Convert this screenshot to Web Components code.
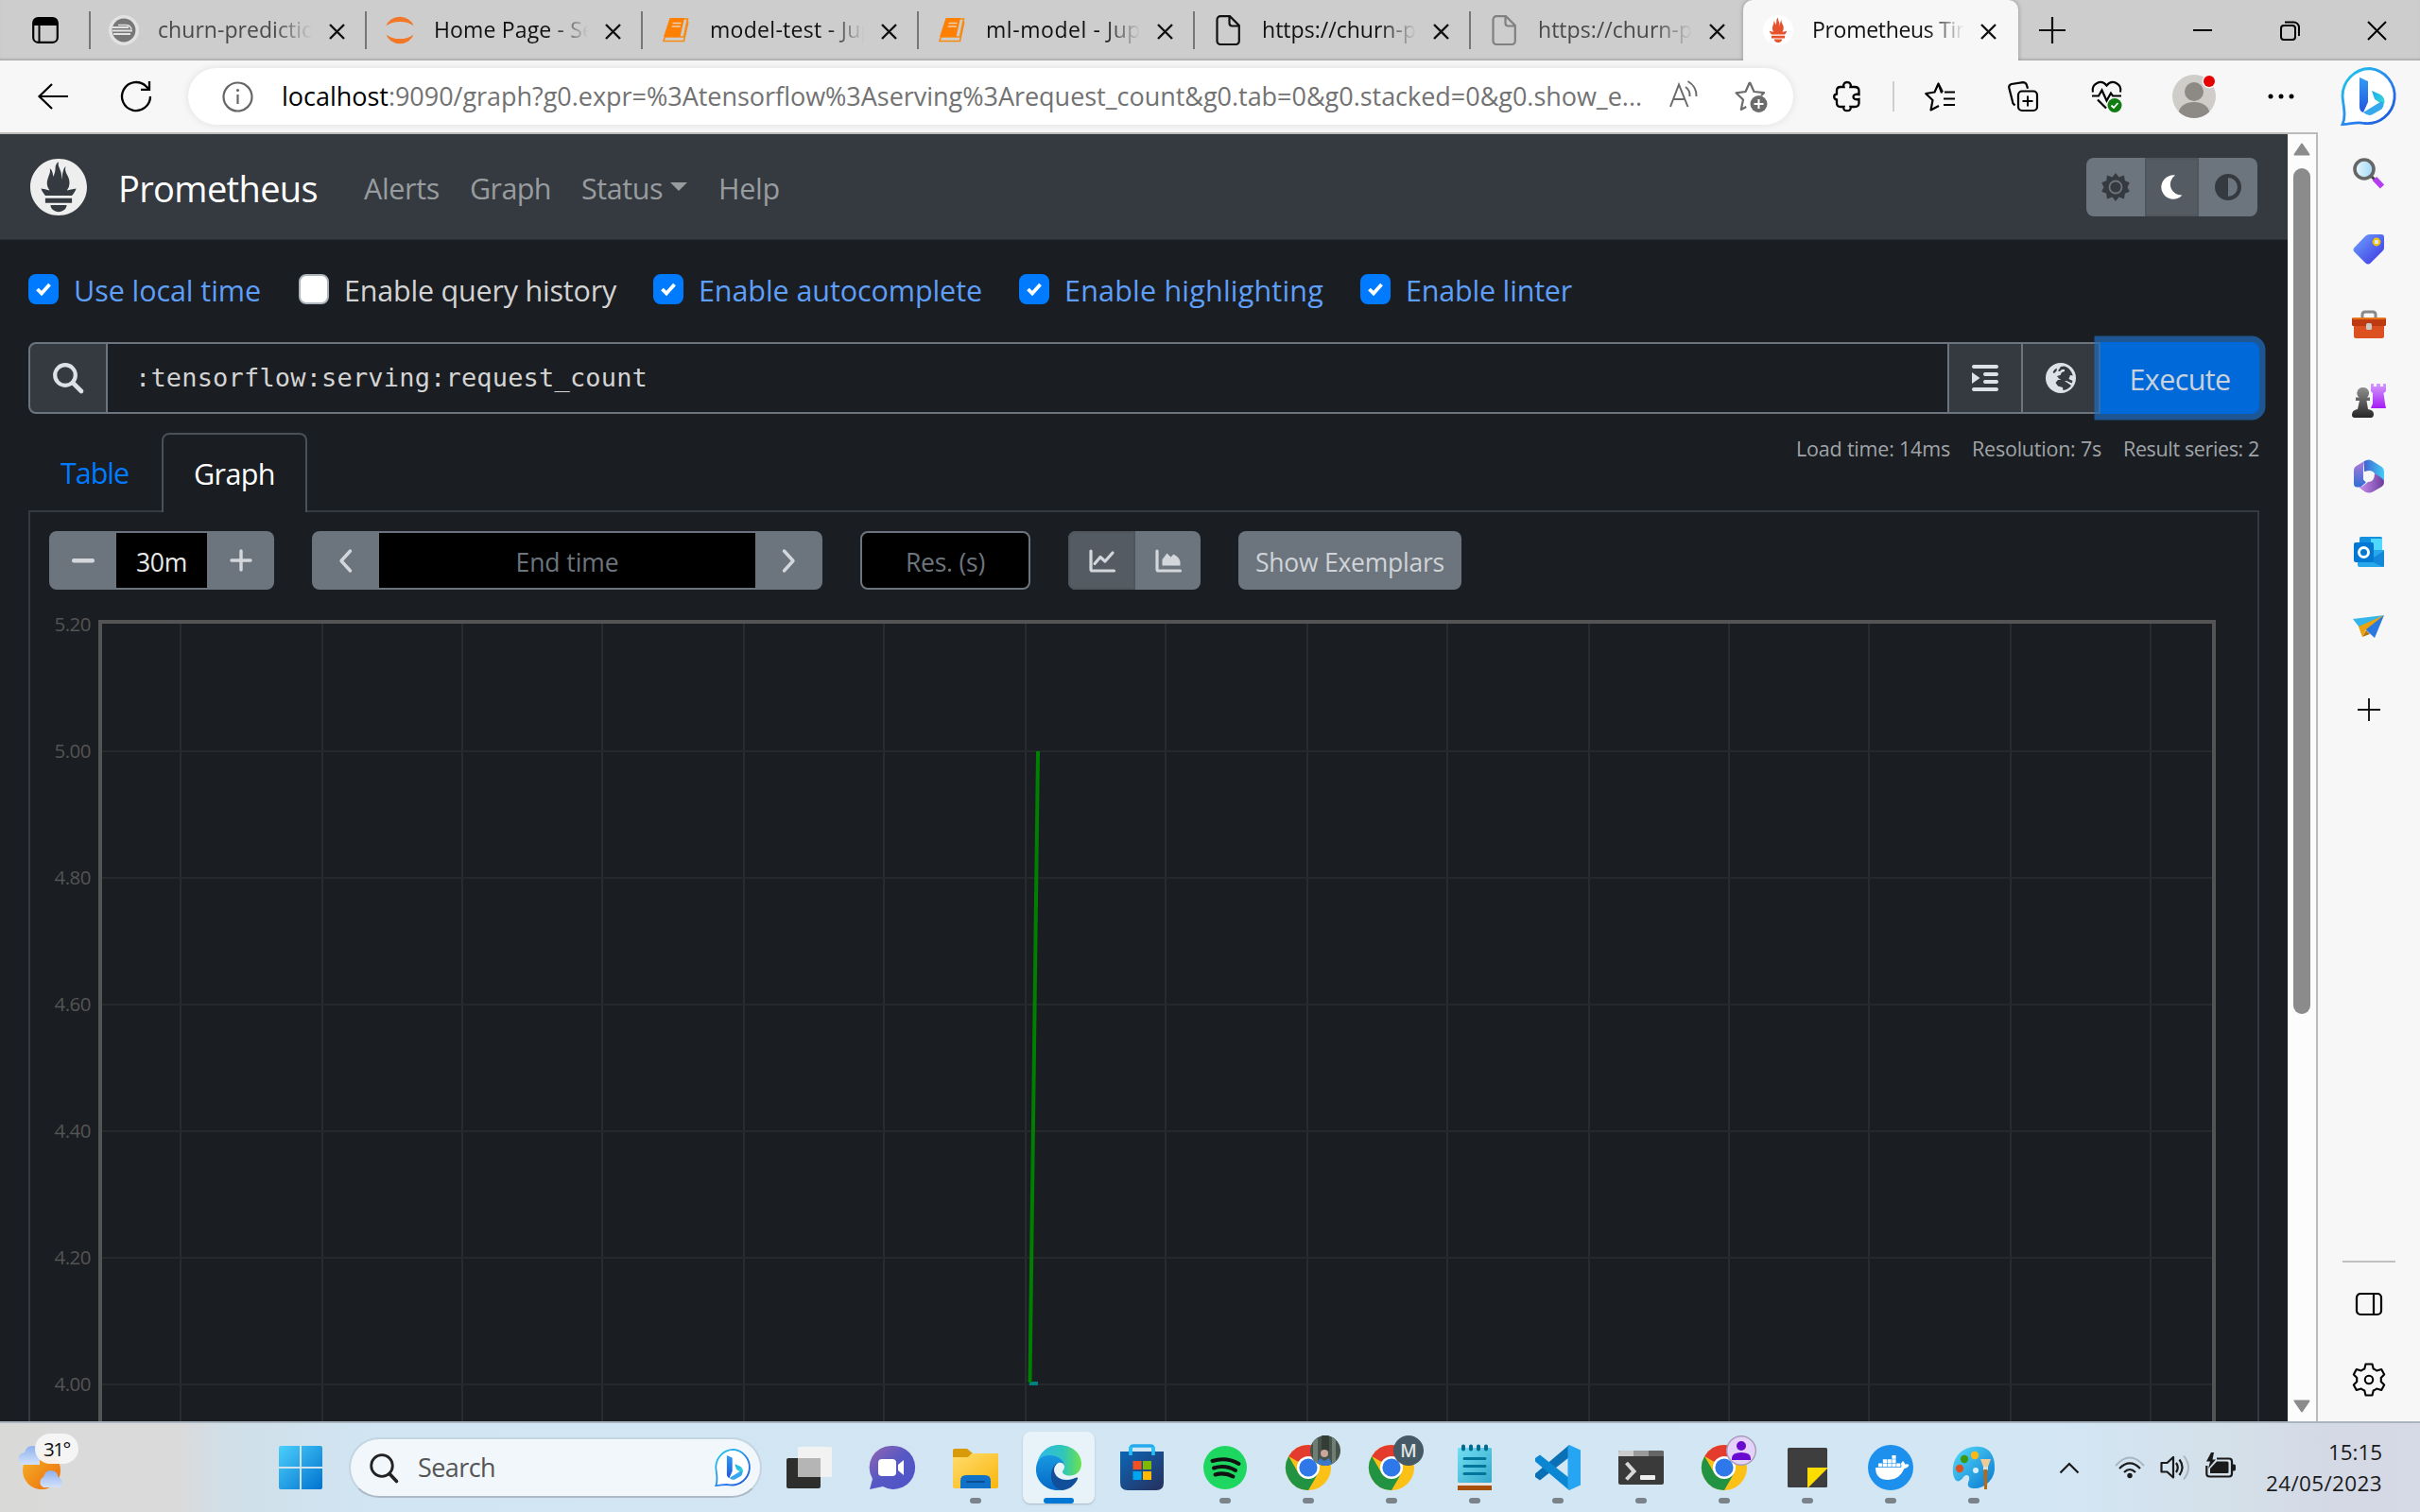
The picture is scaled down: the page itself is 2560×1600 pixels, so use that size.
<!DOCTYPE html>
<html lang="en">
<head>
<meta charset="utf-8">
<title>Prometheus Time Series Collection and Processing Server</title>
<style>
html,body{margin:0;padding:0;background:#1a1d21}
body{width:2560px;height:1600px;overflow:hidden;font-family:"Open Sans","Noto Sans",sans-serif}
</style>
</head>
<body>
<desktop-screen></desktop-screen>
<script>
const ICONS = {
workspaces:[28,28,`<rect x="1.2" y="1.2" width="25.6" height="25.6" rx="5" fill="none" stroke="#000" stroke-width="2.2"/><path d="M1 9V5a4 4 0 0 1 4-4h18a4 4 0 0 1 4 4v4z"/><path d="M7.5 8v18" stroke="#000" stroke-width="2"/>`],
favGrey:[32,32,`<circle cx="16" cy="16" r="16" fill="#e2e2e2"/><circle cx="16" cy="16" r="12.4" fill="#777"/><path d="M4 13h17M4 16.500h21M5 20h18" stroke="#e2e2e2" stroke-width="1.800"/><path d="M10 10.500h8q5 0 6 4.500" stroke="#e2e2e2" stroke-width="1.600" fill="none"/>`],
jupyter:[30,30,`<path d="M0.500 10.500A15 13 0 0 1 29.500 10.500A19 13 0 0 0 0.500 10.500zM0.500 19.500A15 13 0 0 0 29.500 19.500A19 13 0 0 1 0.500 19.500z" fill="#f37726"/>`],
book:[28,26,`<path d="M8 1h18.500L22.500 20H4Q2 20 1.600 22L1 24.500H22.500L26.800 4" fill="none" stroke="#f68a14" stroke-width="1.600"/><path d="M7.500 0H23L18.500 20H1z" fill="#ff8000"/><path d="M10.500 5.500h9M9.700 9h9" stroke="#e9cfb4" stroke-width="1.600"/>`],
page:[26,32,`<path d="M5 1.200h10L24.800 11v16.500a3.500 3.500 0 0 1-3.500 3.500H5a3.500 3.500 0 0 1-3.500-3.500V4.700A3.500 3.500 0 0 1 5 1.200zM14.500 1.500V8.500a3 3 0 0 0 3 3h7" fill="none" stroke="currentColor" stroke-width="2.200"/>`],
promFav:[32,32,`<circle cx="16" cy="16" r="16" fill="#fff"/><circle cx="16" cy="16" r="14" fill="#e6522c"/><path transform="translate(1 1) scale(1.25)" fill="#fff" d="PROM"/>`],
promLogo:[60,60,`<path transform="scale(2.5)" fill="#eee" d="PROM"/>`],
close:[17,17,`<path d="M1 1l15 15M16 1L1 16" stroke="#111" stroke-width="2.400"/>`],
plus:[28,28,`<path d="M14 0v28M0 14h28" stroke="#111" stroke-width="2.200"/>`],
min:[20,20,`<path d="M0 10h20" stroke="#000" stroke-width="2"/>`],
restore:[21,21,`<rect x="1" y="5" width="15" height="15" rx="3" fill="none" stroke="#000" stroke-width="2"/><path d="M5 1.500h9.500a5.500 5.500 0 0 1 5.500 5.500V16" fill="none" stroke="#000" stroke-width="2"/>`],
winClose:[21,21,`<path d="M1 1l19 19M20 1L1 20" stroke="#000" stroke-width="2"/>`],
back:[32,28,`<path d="M32 14H1.500M15 1L1.500 14L15 27" fill="none" stroke="#000" stroke-width="2.200"/>`],
reload:[34,34,`<path d="M32 17A15 15 0 1 1 27.500 6.300L31 9.500M31 1v8.800h-9" fill="none" stroke="#000" stroke-width="2.300"/>`],
info:[33,33,`<circle cx="16.500" cy="16.500" r="15" fill="none" stroke="#666" stroke-width="2.200"/><path d="M16.500 14v10" stroke="#666" stroke-width="2.200"/><circle cx="16.500" cy="9.500" r="1.600" fill="#666"/>`],
read:[31,30,`<path d="M1 28L10 4.500L19.500 28M4.500 20H16" fill="none" stroke="#6b6b6b" stroke-width="2"/><path d="M17 7q5 3.500 4.500 10M19.500 1q9.500 5.500 9 16" fill="none" stroke="#6b6b6b" stroke-width="2"/>`],
starAdd:[36,34,`<path d="M16 2l4.500 10L31 13.200l-3 3M16 2L11.500 12L1.500 13.300L9 20.500L6.800 31l5.500-3" fill="none" stroke="#6b6b6b" stroke-width="2.200" stroke-linejoin="round"/><circle cx="25.500" cy="25" r="9" fill="#6b6b6b"/><path d="M25.500 20v10M20.500 25h10" stroke="#fff" stroke-width="2"/>`],
puzzle:[30,32,`<path d="M8 6h3.500c-1-3.500 1-5 3.500-5s4.500 1.500 3.500 5H23q4.500 0 4.500 4v4c-4-.8-6 .5-6 2.500s2 3.300 6 2.500V23q0 4-4.500 4h-4.500c1 3-1 4.200-3.500 4.200S10.500 30 11.500 27H8q-4 0-4-4v-3.500c-2-.300-2.800-1.500-2.800-3s.8-2.800 2.800-3V10q0-4 4-4z" fill="none" stroke="#000" stroke-width="2.300"/>`],
starLines:[33,31,`<path d="M18 11.500L14.500 1.500L10.500 10.500L1.200 12L8.500 19L6.500 29.500L15 25M14.500 1.500L19 10.500" fill="none" stroke="#000" stroke-width="2.200" stroke-linejoin="round"/><path d="M21 10.500h11M20 17.500h12M20 24h12" stroke="#000" stroke-width="2.200"/>`],
collections:[33,33,`<rect x="11" y="10.500" width="20" height="20.500" rx="4" fill="none" stroke="#000" stroke-width="2.200"/><path d="M21 15.500v11M15.500 21h11" stroke="#000" stroke-width="2"/><path d="M7.500 25.500L5.500 23.500L1.300 7a3.500 3.500 0 0 1 2.500-4L16 1.200q3 0 4 3l1 3.500" fill="none" stroke="#000" stroke-width="2.200"/>`],
heart:[33,34,`<path d="M2 12.500C0 4 10.500-2 16.500 5.500C22.500-2 33 4 31 12.500M1 16.500h7l3.500-6l5 11l4.500-8l2 3h9M7 20.500l9 9" fill="none" stroke="#000" stroke-width="2.200"/><circle cx="25" cy="26.500" r="7.500" fill="#107c10"/><path d="M21.500 26.500l2.500 2.500 4.500-5" stroke="#fff" stroke-width="1.800" fill="none"/>`],
avatar:[48,46,`<clipPath id="a"><circle cx="23" cy="23" r="23"/></clipPath><circle cx="23" cy="23" r="23" fill="#cfcdca"/><g clip-path="url(#a)" fill="#8d8984"><circle cx="23" cy="18" r="10"/><ellipse cx="23" cy="40" rx="16" ry="11"/></g><circle cx="39" cy="7" r="7.500" fill="#f7f7f7"/><circle cx="39" cy="7" r="6" fill="#e60000"/>`],
dots:[28,6,`<circle cx="3" cy="3" r="2.500"/><circle cx="14" cy="3" r="2.500"/><circle cx="25" cy="3" r="2.500"/>`],
bing:[62,62,`<defs><linearGradient id="b" x1="0" y1="0" x2="1" y2="1"><stop offset="0" stop-color="#1bd0ea"/><stop offset=".5" stop-color="#2a8af0"/><stop offset="1" stop-color="#1b4fd8"/></linearGradient><linearGradient id="c" x1="0" y1="0" x2="0" y2="1"><stop offset="0" stop-color="#2f9bf5"/><stop offset="1" stop-color="#2256e0"/></linearGradient><linearGradient id="d" x1="0" y1="0" x2="1" y2="1"><stop offset="0" stop-color="#19a9f2"/><stop offset="1" stop-color="#3de0d0"/></linearGradient></defs><path d="M31 1.500A29 29 0 1 1 25 59.500C17 57.500 10 60.500 2 60.500C6 52 3 42 2 31A29.300 29.300 0 0 1 31 1.500z" fill="#fff" stroke="url(#b)" stroke-width="2.800"/><path d="M20 11l9 4v22l-5 11q-4-1-4-6z" fill="url(#c)"/><path d="M33 25l9 4q5 3 4.500 9l-3 4q-.5-4-4.500-6l-3-2z" fill="url(#d)"/><path d="M24 48L43.500 36q4 4 0 8.500L33 50.500Q29 52 24 48z" fill="#35a8ee"/>`],
gearSun:[30,30,`<path fill="#343a40" d="M15 0l3.500 4.500L24 2.500l.8 5.700 5 2L27.500 15l2.300 4.800-5 2-.8 5.700-5.500-2L15 30l-3.500-4.500L6 27.500l-.8-5.700-5-2L2.500 15 .2 10.200l5-2L6 2.500l5.500 2z"/><circle cx="15" cy="15" r="6.500" fill="none" stroke="#6c757d" stroke-width="1.800"/>`],
moon:[22,26,`<path d="M14 .5A12.700 12.700 0 1 0 21.500 21.500A11.500 11.500 0 0 1 14 .5z" fill="#fff"/>`],
half:[28,28,`<circle cx="14" cy="14" r="12" fill="none" stroke="#343a40" stroke-width="4"/><path d="M14 2a12 12 0 0 0 0 24z" fill="#343a40"/>`],
caret:[18,9,`<path d="M0 0h18L9 9z" fill="#999c9f"/>`],
search:[32,32,`<circle cx="13" cy="13" r="10.800" fill="none" stroke="#dee2e6" stroke-width="4.200"/><path d="M21 21l9 9" stroke="#dee2e6" stroke-width="4.600" stroke-linecap="round"/>`],
indent:[28,28,`<path d="M2 2h24M14 10h12M14 18h12M2 26h24" stroke="#dee2e6" stroke-width="4" stroke-linecap="round"/><path d="M0 8l8.500 6L0 20z" fill="#dee2e6"/>`],
globe:[32,32,`<circle cx="16" cy="16" r="16" fill="#dee2e6"/><path fill="#343a40" d="M16 4l4-.6Q27 6 28.800 13.500L26 13l-1.500 4 4 2-.8 2.500L22 19l-4 0-4-2.500-2-2.500 3.500-1 1.500-3 3-1 0-2-3 0-2 2-2-.5zM9.500 7l2.500-1.200-.5 2.700L9 11 7.500 10zM13 18l5.500 0 6.500 4.500 2 1.500q-3.500 4.700-8.500 5l-.5-3-5-1.500-2.500-3.500z"/>`],
minus:[24,5,`<rect width="24" height="4.500" rx="2" fill="#d3d7dc"/>`],
plusB:[24,24,`<path d="M12 2v20M2 12h20" stroke="#d3d7dc" stroke-width="3.400" stroke-linecap="round"/>`],
left:[15,25,`<path d="M12.500 2L3 12.500l9.500 10.500" fill="none" stroke="#d3d7dc" stroke-width="3.400" stroke-linecap="round" stroke-linejoin="round"/>`],
right:[15,25,`<path d="M2.500 2L12 12.500L2.500 23" fill="none" stroke="#d3d7dc" stroke-width="3.400" stroke-linecap="round" stroke-linejoin="round"/>`],
line:[28,25,`<path d="M2 2v19.500q0 1.500 1.500 1.500H26.500M6 15.500l6-7 5 4.500 8-9" fill="none" stroke="#d3d7dc" stroke-width="3.200" stroke-linecap="round" stroke-linejoin="round"/>`],
area:[28,25,`<path d="M2 2v19.500q0 1.500 1.500 1.500H26.500" fill="none" stroke="#d3d7dc" stroke-width="3.200" stroke-linecap="round"/><path d="M7.500 17.500V11l5-6.500 4 4 3-3q6 3 7 8v4z" fill="#d3d7dc"/>`],
check:[18,14,`<path d="M2.500 7l4.500 4.500L15.500 2" fill="none" stroke="#fff" stroke-width="3.800"/>`],
up:[18,14,`<path d="M9 1.500L16.500 12.500H1.500z" fill="#8b8b8b" stroke="#8b8b8b" stroke-width="2" stroke-linejoin="round"/>`],
down:[18,14,`<path d="M9 12.500L16.500 1.500H1.500z" fill="#8b8b8b" stroke="#8b8b8b" stroke-width="2" stroke-linejoin="round"/>`],
sSearch:[34,34,`<defs><linearGradient id="l"><stop offset="0" stop-color="#e9f7fd"/><stop offset="1" stop-color="#9fd8f7"/></linearGradient></defs><path d="M18 18l5 5" stroke="#444" stroke-width="3"/><path d="M23 22l8 8.500" stroke="#b63cf2" stroke-width="6"/><circle cx="12" cy="12" r="10" fill="url(#l)" stroke="#666" stroke-width="3.600"/>`],
sTag:[34,34,`<defs><linearGradient id="t" x1="0" y1="0" x2="1" y2="1"><stop offset="0" stop-color="#6fa5ff"/><stop offset="1" stop-color="#3b32e0"/></linearGradient></defs><path d="M18 1h12q3 0 3 3v11q0 2-1.500 3.500L19 31q-3 3-6 0L2 20q-3-3 0-5.500L13 3q2-2 5-2z" fill="url(#t)"/><circle cx="25" cy="9" r="3.300" fill="#dfe6ff" stroke="#f2c500" stroke-width="2.200"/>`],
sBox:[36,30,`<path d="M11 8V4q0-3 3-3h8q3 0 3 3v4" fill="none" stroke="#8a8a8a" stroke-width="3"/><rect x="2" y="8" width="32" height="21" rx="2.500" fill="#dd5020"/><rect x="0" y="7" width="36" height="9" rx="1.500" fill="#bd3a12"/><path d="M1 8h34" stroke="#e87516" stroke-width="2"/><rect x="15" y="13" width="6" height="7" rx="1.500" fill="#c9c9c9"/>`],
sChess:[36,36,`<defs><linearGradient id="p" x1="0" y1="0" x2="0" y2="1"><stop offset="0" stop-color="#8f8f8f"/><stop offset="1" stop-color="#262626"/></linearGradient><linearGradient id="r" x1="0" y1="0" x2="0" y2="1"><stop offset="0" stop-color="#d69bff"/><stop offset="1" stop-color="#a31cf5"/></linearGradient></defs><path d="M20 0h3v3h3V0h4v3h3V0h3v8l-2.500 2L35 21l1 5H20l2-5V10l-2-2z" fill="url(#r)"/><path d="M12 4a6 6 0 0 1 4 10.500h3v3.500h-3.500L17 27q6 1 6 5 0 4-3 4H3q-3 0-3-3 0-5 6-6l2-9H4v-3.500h3.500A6 6 0 0 1 12 4z" fill="url(#p)"/>`],
sOffice:[32,36,`<defs><linearGradient id="o1" x1="0" y1="0" x2="0" y2="1"><stop offset="0" stop-color="#b07ad8"/><stop offset="1" stop-color="#2f6fd6"/></linearGradient><linearGradient id="o2"><stop offset="0" stop-color="#3f63d3"/><stop offset="1" stop-color="#44cdf5"/></linearGradient><linearGradient id="o3"><stop offset="0" stop-color="#c890ee"/><stop offset="1" stop-color="#6b3d9e"/></linearGradient></defs><path d="M11 2L2 7.500Q0 9 0 11.500V26q0 3 3 3.500h4l6-5-3-3V10z" fill="url(#o1)"/><path d="M11 2q5-3 9 0l9.500 6Q32 10 32 12.500V23l-10-8q-2-3-6-3l-5 1z" fill="url(#o2)"/><path d="M5 29.500q4 0 7-3l3-2.500q7 0 7-9l7 4.500q3 2 3 5 0 3-2.500 4.500L20 34.500q-4 2-8 0z" fill="url(#o3)"/>`],
sOutlook:[32,32,`<rect x="6" y="0" width="24" height="20" rx="1.500" fill="#1490df"/><rect x="18" y="2" width="12" height="14" fill="#50d9ff"/><path d="M4 14h28v16q0 2-2 2H6q-2 0-2-2z" fill="#28a8ea"/><path d="M32 15L16 25l15 7q1 0 1-2z" fill="#1488d8"/><rect x="0" y="6" width="21" height="21" rx="2" fill="#0078d4"/><circle cx="10.500" cy="16.500" r="5" fill="none" stroke="#fff" stroke-width="3"/>`],
sPlane:[34,26,`<path d="M0 4L33 0L7 13z" fill="#35b5e9"/><path d="M33 0L23 24L10 12z" fill="#2a79e0"/><path d="M33 0L6 12l4 11 4-8z" fill="#eba20d"/><path d="M10 23l4-7 4 4z" fill="#b87508"/>`],
panel:[28,24,`<rect x="1" y="1" width="26" height="22" rx="4" fill="none" stroke="#000" stroke-width="2.200"/><path d="M19 1v22" stroke="#000" stroke-width="2.200"/>`],
gear:[34,36,`<path d="M13.500 1.500h7l1.200 5q2 .8 3.500 2l5-1.500 3 5.500-3.500 3.500q.3 2 0 4l3.500 3.500-3 5.500-5-1.500q-1.500 1.200-3.500 2l-1.200 5h-7l-1.200-5q-2-.8-3.500-2l-5 1.500-3-5.500L4.300 20q-.3-2 0-4L.8 12.500l3-5.500 5 1.500q1.500-1.200 3.500-2z" fill="none" stroke="#000" stroke-width="2.100" stroke-linejoin="round"/><circle cx="17" cy="18" r="4.200" fill="none" stroke="#000" stroke-width="2.100"/>`],
weather:[64,56,`<defs><linearGradient id="w" x1="0" y1="0" x2="1" y2="1"><stop offset="0" stop-color="#f6b62d"/><stop offset="1" stop-color="#ec6a08"/></linearGradient><linearGradient id="cl" x1="0" y1="0" x2="0" y2="1"><stop offset="0" stop-color="#8eb0ee"/><stop offset="1" stop-color="#d4e2fb"/></linearGradient></defs><circle cx="24" cy="28" r="20" fill="url(#w)"/><path d="M6 22a6.500 6.500 0 0 1 0-13q2-7 8-7 7 0 8 8v12z" fill="url(#cl)"/><path d="M26 46a6 6 0 0 1 0-11q2-7 7.500-7 7 0 8 7a6 6 0 0 1 1 11z" fill="url(#cl)"/>`],
windows:[46,46,`<defs><linearGradient id="wi" x1="0" y1="0" x2="1" y2="1"><stop offset="0" stop-color="#4cd0fb"/><stop offset="1" stop-color="#0072d0"/></linearGradient></defs><path d="M2 0h20v22H0V2q0-2 2-2zM24 0h20q2 0 2 2v20H24zM0 24h22v22H2q-2 0-2-2zM24 24h22v20q0 2-2 2H24z" fill="url(#wi)"/>`],
tSearch:[30,31,`<circle cx="13" cy="13" r="11.300" fill="none" stroke="#222" stroke-width="2.800"/><path d="M21 21.500l7.500 8" stroke="#222" stroke-width="3.600" stroke-linecap="round"/>`],
taskview:[48,48,`<rect x="0" y="14" width="36" height="32" rx="2" fill="#2e2e2d"/><rect x="12" y="2" width="36" height="32" rx="1.500" fill="#f2f2f2"/><rect x="12" y="14" width="24" height="20" fill="#b5b5b5"/>`],
chat:[48,48,`<defs><linearGradient id="ch" x1="0" y1="0" x2="1" y2="1"><stop offset="0" stop-color="#9465b0"/><stop offset=".5" stop-color="#5558c4"/><stop offset="1" stop-color="#4f52c8"/></linearGradient></defs><g transform="translate(-1 0)"><path d="M24 1a23 23 0 1 1-9 43L1 47 4 36A23 23 0 0 1 24 1z" fill="url(#ch)"/><rect x="10" y="15" width="19" height="18" rx="4" fill="#fff"/><path d="M31 21l6-5v16l-6-5z" fill="#fff"/></g>`],
folder:[48,48,`<path d="M0 6q0-2 2-2h13l6 5h25q2 0 2 2v10H0z" fill="#d99a09"/><defs><linearGradient id="fo" x1="0" y1="0" x2="1" y2="1"><stop offset="0" stop-color="#ffdc6c"/><stop offset="1" stop-color="#fab60e"/></linearGradient></defs><path d="M0 13h16l4-4h28v35q0 2-2 2H2q-2 0-2-2z" fill="url(#fo)"/><path d="M8 46V38q0-6 6-6h20q6 0 6 6v8z" fill="#0f72c8"/><path d="M15 39h18" stroke="#0b4d91" stroke-width="2.200" stroke-linecap="round"/>`],
edge:[48,48,`<defs><linearGradient id="e1"><stop offset="0" stop-color="#2fb8ea"/><stop offset=".6" stop-color="#30c6b8"/><stop offset="1" stop-color="#6be34b"/></linearGradient><linearGradient id="e2" x1="0" y1="0" x2="0" y2="1"><stop offset="0" stop-color="#1798e0"/><stop offset="1" stop-color="#0669c8"/></linearGradient></defs><path d="M1 22C2 9 12 0 24 0c14 0 24 9 24 20 0 8-6 12.500-12 12.500-5 0-8-2-8-4 0-1.500 2-2 2-6 0-6-6-10-14-10S2 17 1 22z" fill="url(#e1)"/><path d="M0 24C1 15 7 11 14 11c9 0 16 5 16 11-1-3-4-4-6.500-3C13 25 17 46 32 46q-4 2-9 2C10 48-1 38 0 24z" fill="url(#e2)"/><path d="M23 19c-8 6-3 18 9 18 5 0 9-2 11-2.500 1 0 1.500.500 1 1.500C41 43 34 48 27 48 14 45 12 25 23 19z" fill="#124f9b"/>`],
store:[48,48,`<path d="M12 11V4q0-3 3-3h18q3 0 3 3v7" fill="none" stroke="#27a9ee" stroke-width="3.600"/><defs><linearGradient id="st" x1="0" y1="0" x2="1" y2="1"><stop offset="0" stop-color="#0c66b8"/><stop offset="1" stop-color="#272f5b"/></linearGradient></defs><path d="M1 7h46v33q0 8-8 8H9q-8 0-8-8z" fill="url(#st)"/><path d="M12 2v9M36 2v9" stroke="#27c0f4" stroke-width="3.600"/><path fill="#f25022" d="M14.500 17h9v9h-9z"/><path fill="#7fba00" d="M25 17h9v9h-9z"/><path fill="#00a4ef" d="M14.500 28h9v9h-9z"/><path fill="#ffb900" d="M25 28h9v9h-9z"/>`],
spotify:[48,48,`<circle cx="24" cy="24" r="23" fill="#1ed760"/><path d="M10.500 17q15-4.500 28 3M12 24.500q12-4 23 2.500M13.500 31.500q10-3 19 2" fill="none" stroke="#111" stroke-width="4" stroke-linecap="round"/>`],
chrome:[48,48,`<circle cx="24" cy="24" r="24" fill="#fbc116"/><path d="M24 24L3.200 12A24 24 0 0 1 44.800 12z" fill="#e33b2e"/><path d="M24 12h20.800l-9.500 8z" fill="#e33b2e"/><path d="M3.200 12A24 24 0 0 0 24 48l10.400-18L24 24 13.600 30z" fill="#229342"/><circle cx="24" cy="24" r="12" fill="#fff"/><circle cx="24" cy="24" r="9.600" fill="#2f78ea"/>`],
notepad:[48,48,`<path d="M6 43h36v5H6z" fill="#a6500c"/><path d="M6 39h36v4H6z" fill="#e9e4e0"/><defs><linearGradient id="np" x1="0" y1="0" x2="1" y2="1"><stop offset="0" stop-color="#72def3"/><stop offset="1" stop-color="#35a9cb"/></linearGradient></defs><rect x="6" y="3" width="36" height="37" rx="1.500" fill="url(#np)"/><path d="M12 1.500v3M20 1.500v3M28 1.500v3M36 1.500v3" stroke="#02698f" stroke-width="4" stroke-linecap="round"/><path d="M13 14.500h22M13 22.500h22M13 30.500h22" stroke="#02759b" stroke-width="3" stroke-linecap="round"/>`],
vscode:[48,48,`<path d="M36 0v13L5 37.500 0 34V30.500z" fill="#0a6fb4"/><path d="M36 48V35L5 10.500 0 14v3.500z" fill="#0a86d2"/><path d="M36 0l12 5.500v37L36 48q-1.500-1-1.500-4V4q0-3 1.500-4z" fill="#26a5f2"/>`],
terminal:[48,48,`<rect y="6" width="48" height="36" rx="2" fill="#3a3a3a"/><path d="M0 12V8q0-2 2-2h14v6z" fill="#ccc"/><path d="M16 6h16v6H16z" fill="#999"/><path d="M32 6h14q2 0 2 2v4H32z" fill="#666"/><path d="M8.500 19l8 9-8 8.500" fill="none" stroke="#d8d8d8" stroke-width="4"/><rect x="23" y="32" width="16" height="5" rx="1" fill="#eee"/>`],
sticky:[48,48,`<rect x="3" y="3" width="42" height="42" rx="1.500" fill="#3e3e3e"/><path d="M24 24h21v1L25 45h-1z" fill="#fddc00"/>`],
docker:[48,48,`<circle cx="24" cy="24" r="24" fill="#1d90ed"/><path d="M8 24h27q1-1.500 0-4 1-2 2-3 2 1.500 2.300 3.500 2.500-.5 4.200.5-1 3.500-5 4-5 12-17 12Q8 37 8 24z" fill="#fff"/><path fill="#fff" d="M11 19.500h4.200v3.700H11zM15.800 19.500H20v3.700h-4.200zM20.600 19.500h4.200v3.700h-4.200zM25.400 19.500h4.200v3.700h-4.200zM15.800 15.300H20V19h-4.200zM20.600 15.300h4.200V19h-4.200zM25.400 15.300h4.200V19h-4.200zM25.400 11.100h4.200v3.700h-4.200zM30.200 19.500h4.200v3.700h-4.200z"/>`],
paint:[48,48,`<defs><linearGradient id="pa" x1="0" y1="0" x2="1" y2="1"><stop offset="0" stop-color="#55dcfa"/><stop offset="1" stop-color="#0877cf"/></linearGradient></defs><path d="M2 30C0 12 14 0 30 2c12 1 17 12 16 24C45 38 34 47 23 46c-6-1-6-4-4-9 1-4-2-7-6-3-3 5-9 8-11-4z" fill="url(#pa)"/><circle cx="9" cy="25" r="4.200" fill="#e0501f"/><circle cx="14" cy="15" r="4.200" fill="#3a9a14"/><circle cx="25" cy="11" r="4.200" fill="#fdb913"/><circle cx="26" cy="27" r="3" fill="#d8f0fb"/><path d="M31 15h11l-3 8h-5z" fill="#f0cb97"/><path d="M34 23h5v4h-5z" fill="#ddd"/><path d="M34.500 26h4l-.5 21h-3z" fill="#b56a18"/>`],
chev:[22,13,`<path d="M1.500 11.500L11 2l9.500 9.500" fill="none" stroke="#1a1a1a" stroke-width="2.200"/>`],
wifi:[32,24,`<path d="M1 10Q16-7 31 10" fill="none" stroke="#a9b7c1" stroke-width="2"/><path d="M5 13q11-11 22 0M10 17q6-6 12 0" fill="none" stroke="#1a1a1a" stroke-width="2.200"/><circle cx="16" cy="20.500" r="2.700" fill="#1a1a1a"/>`],
sound:[33,28,`<path d="M1.500 9h6L14 3v21.500l-6.500-6h-6z" fill="none" stroke="#1a1a1a" stroke-width="2.200" stroke-linejoin="round"/><path d="M17 9q3.500 5 0 10M20.500 5.500q6 8 0 16.500" fill="none" stroke="#1a1a1a" stroke-width="2.200"/><path d="M25 1.500q10 12.500 0 25" fill="none" stroke="#a9b7c1" stroke-width="2"/>`],
battery:[33,28,`<path d="M1.300 14v8.500q0 3 3 3H25q3 0 3-3V9.500q0-3-3-3H12" fill="none" stroke="#1a1a1a" stroke-width="2.200"/><path d="M5 22V17L12 9.500H23q1.500 0 1.500 1.500V21q0 1-1.500 1z" fill="#1a1a1a"/><path d="M29 12.500h1.500q1.500 0 1.500 2v3q0 2-1.500 2H29z" fill="#1a1a1a"/><path d="M6 0L1 9.500h4L3 17l8-9.500H7.500L9 0z" fill="#1a1a1a"/>`],
badgePhoto:[32,32,`<clipPath id="bp"><circle cx="16" cy="16" r="16"/></clipPath><g clip-path="url(#bp)"><rect width="32" height="32" fill="#47524a"/><path d="M3 0h5v32H3zM23 0h4v32h-4z" fill="#707d72"/><path d="M12 0h8v16h-8z" fill="#333c35"/><circle cx="15" cy="19" r="4" fill="#c9a59a"/><path d="M6 32l4-8 5 3 5-3 4 8z" fill="#3b78c9"/></g>`],
badgeUser:[32,32,`<circle cx="16" cy="16" r="15.300" fill="#e4d2fa" stroke="#a79cb8" stroke-width="1.400"/><circle cx="16" cy="11" r="5" fill="#6a0ad0"/><path d="M6 26v-2q0-6 10-6t10 6v2z" fill="#6a0ad0"/>`]
};
const PROM = "M12 0C5.373 0 0 5.372 0 12c0 6.627 5.373 12 12 12s12-5.373 12-12c0-6.628-5.373-12-12-12zm0 22.46c-1.885 0-3.414-1.26-3.414-2.814h6.828c0 1.553-1.528 2.813-3.414 2.813zm5.64-3.745H6.36v-2.046h11.28v2.046zm-.04-3.098H6.391c-.037-.043-.075-.086-.111-.13-1.155-1.401-1.427-2.133-1.69-2.879-.005-.025 1.4.287 2.395.511 0 0 .513.119 1.262.255-.72-.843-1.147-1.915-1.147-3.01 0-2.406 1.845-4.508 1.18-6.207.648.053 1.34 1.367 1.387 3.422.689-.951.977-2.69.977-3.755 0-1.103.727-2.385 1.454-2.429-.648 1.069.168 1.984.894 4.256.272.854.237 2.29.447 3.201.07-1.892.395-4.652 1.595-5.605-.529 1.2.079 2.702.494 3.424.671 1.164 1.078 2.047 1.078 3.716a4.642 4.642 0 01-1.11 2.996c.792-.149 1.34-.283 1.34-.283l2.573-.502s-.374 1.538-1.81 3.019z";

function define(name, render, after) {
  customElements.define(name, class extends HTMLElement {
    connectedCallback() {
      if (this.shadowRoot) return;
      const root = this.attachShadow({ mode: "open" });
      root.innerHTML = render(this);
      if (after) after(this, root);
    }
  });
}

/* Inline icon, size from the registry unless w/h are given */
define("ui-icon", el => {
  const [w, h, body] = ICONS[el.getAttribute("name")];
  const W = el.getAttribute("w") || w, H = el.getAttribute("h") || h;
  return `<style>:host{display:block;flex:none;width:${W}px;height:${H}px}svg{display:block;overflow:visible}</style>
  <svg width="${W}" height="${H}" viewBox="0 0 ${w} ${h}">${body.replace("PROM", PROM)}</svg>`;
});

/* One line of text tracked to an exact width */
define("fit-text", el => `<style>:host{display:block;flex:none;white-space:nowrap;padding-top:var(--drop,.09em);line-height:1.3;width:${el.getAttribute("w")}px}span{display:inline-block}</style><span><slot></slot></span>`,
(el, root) => {
  const s = root.querySelector("span"), n = el.textContent.length;
  s.style.letterSpacing = ((+el.getAttribute("w") - s.getBoundingClientRect().width) / n).toFixed(3) + "px";
});

define("edge-tab", el => `<style>
:host{display:flex;flex:none;box-sizing:border-box;width:292px;height:64px;align-items:center;position:relative;color:#111;--drop:0px}
.sep{width:2px;height:40px;background:#777;flex:none}
.fav{width:32px;margin-left:19px;display:flex;justify-content:center;color:#111}
.t{width:163px;margin-left:20px;overflow:hidden;font-size:23px;-webkit-mask-image:linear-gradient(90deg,#000 76%,transparent 100%)}
ui-icon.x{margin-left:18px;margin-top:2px}
:host([dim]) .t{color:#4a4a4a}:host([dim]) .fav{color:#808080}
:host([active]){width:291px;margin-left:-2px;background:#f7f7f7;border-radius:10px 10px 0 0;box-shadow:0 0 5px rgba(0,0,0,.3)}
:host([active]) .sep{background:none}
:host([active]) .t{width:161px}
:host([active]) ui-icon.x{margin-left:17px}
</style><div class="sep"></div><div class="fav"><ui-icon name="${el.getAttribute("icon")}"></ui-icon></div><div class="t"><slot></slot></div><ui-icon class="x" name="close"></ui-icon>`);

define("edge-tabs", () => `<style>
:host{display:flex;height:64px;background:#cdcdcd;align-items:center;overflow:hidden;flex:none;box-shadow:inset 0 -3px 3px -2px rgba(0,0,0,.25)}
.ws{margin:0 32px 0 34px}.np{margin-left:22px}.mi{margin-left:135px}.re{margin-left:72px}.cl{margin-left:71px}
</style><ui-icon class="ws" name="workspaces"></ui-icon>
<edge-tab icon="favGrey" dim><fit-text w="166">churn-predictio</fit-text></edge-tab>
<edge-tab icon="jupyter"><fit-text w="170">Home Page - Se</fit-text></edge-tab>
<edge-tab icon="book"><fit-text w="174">model-test - Jup</fit-text></edge-tab>
<edge-tab icon="book"><fit-text w="164">ml-model - Jup</fit-text></edge-tab>
<edge-tab icon="page"><fit-text w="163">https://churn-p</fit-text></edge-tab>
<edge-tab icon="page" dim><fit-text w="163">https://churn-p</fit-text></edge-tab>
<edge-tab icon="promFav" active><fit-text w="173">Prometheus Tim</fit-text></edge-tab>
<ui-icon class="np" name="plus"></ui-icon><ui-icon class="mi" name="min"></ui-icon><ui-icon class="re" name="restore"></ui-icon><ui-icon class="cl" name="winClose"></ui-icon>`);

define("edge-toolbar", () => `<style>
:host{display:flex;flex:none;height:76px;background:#f7f7f7;align-items:center;padding-left:40px;--drop:0px}
.pill{display:flex;align-items:center;box-sizing:border-box;width:1698px;height:60px;border-radius:30px;background:#fff;margin-left:38px;padding-left:36px;box-shadow:0 0 8px rgba(0,0,0,.1)}
.url{margin-left:30px;font-size:27px;color:#727272}.url b{font-weight:400;color:#000}
.div{width:2px;height:32px;background:#cfcfcf}
</style><ui-icon name="back"></ui-icon><ui-icon name="reload" style="margin-left:55px"></ui-icon>
<div class="pill"><ui-icon name="info"></ui-icon><fit-text class="url" w="1439"><b>localhost</b>:9090/graph?g0.expr=%3Atensorflow%3Aserving%3Arequest_count&amp;g0.tab=0&amp;g0.stacked=0&amp;g0.show_e...</fit-text>
<ui-icon name="read" style="margin-left:29px;margin-top:-4px"></ui-icon><ui-icon name="starAdd" style="margin-left:38px"></ui-icon></div>
<ui-icon name="puzzle" style="margin-left:42px"></ui-icon><div class="div" style="margin-left:33px"></div>
<ui-icon name="starLines" style="margin-left:32px"></ui-icon><ui-icon name="collections" style="margin-left:55px"></ui-icon><ui-icon name="heart" style="margin-left:55px"></ui-icon><ui-icon name="avatar" style="margin-left:53px"></ui-icon><ui-icon name="dots" style="margin-left:53px"></ui-icon><ui-icon name="bing" style="margin-left:49px"></ui-icon>`);

define("edge-sidebar", () => `<style>
:host{display:flex;flex-direction:column;align-items:center;width:108px;flex:none;background:#f7f7f7}
.i{height:80px;display:flex;align-items:center;justify-content:center;flex:none}
.r{height:2px;width:56px;background:#c0c0c0;margin-top:536px;flex:none}
</style><div class="i" style="margin-top:4px"><ui-icon name="sSearch"></ui-icon></div>
${["sTag","sBox","sChess","sOffice","sOutlook","sPlane"].map(n => `<div class="i"><ui-icon name="${n}"></ui-icon></div>`).join("")}
<div class="i" style="height:94px"><ui-icon name="plus" w="24" h="24"></ui-icon></div>
<div class="r"></div><div class="i" style="height:88px"><ui-icon name="panel"></ui-icon></div><div class="i" style="height:72px"><ui-icon name="gear"></ui-icon></div>`);

define("page-scrollbar", () => `<style>
:host{display:flex;flex-direction:column;align-items:center;box-sizing:border-box;width:32px;flex:none;background:#fcfcfc;border-right:2px solid #bbb;padding:9px 0}
.th{width:18px;height:895px;border-radius:9px;background:#8b8b8b;margin-top:13px}
.sp{flex:1}
</style><ui-icon name="up"></ui-icon><div class="th"></div><div class="sp"></div><ui-icon name="down"></ui-icon>`);

define("prom-nav", () => `<style>
:host{display:flex;height:112px;flex:none;box-sizing:border-box;background:#343a40;border-bottom:1px solid #2a2e33;align-items:center;padding:0 32px;color:#999c9f;font-size:30.5px;--drop:.15em}
.brand{font-size:38px;color:#fff;margin-left:33px;--drop:.09em}
.g{display:flex;margin-left:auto;height:62px;border-radius:8px;overflow:hidden;background:#6c757d}
.g div{display:flex;align-items:center;justify-content:center;box-sizing:border-box;width:62px}
.g .on{width:57px;background:#545b62;border:2px solid #4e555b}
</style><ui-icon name="promLogo"></ui-icon><fit-text class="brand" w="211">Prometheus</fit-text>
<fit-text w="80" style="margin-left:49px">Alerts</fit-text><fit-text w="86" style="margin-left:32px">Graph</fit-text><fit-text w="86" style="margin-left:32px">Status</fit-text><ui-icon name="caret" style="margin-left:8px"></ui-icon><fit-text w="65" style="margin-left:33px">Help</fit-text>
<div class="g"><div><ui-icon name="gearSun"></ui-icon></div><div class="on"><ui-icon name="moon"></ui-icon></div><div><ui-icon name="half"></ui-icon></div></div>`);

define("prom-check", el => `<style>
:host{display:flex;align-items:center;color:#d3d3d3;font-size:30.5px;flex:none;--drop:0px}
.b{width:32px;height:32px;box-sizing:border-box;border-radius:8px;background:#fff;border:2px solid #adb5bd;display:flex;align-items:center;justify-content:center;margin-right:16px;margin-top:-4px}
:host([on]){color:#5e9ffa}:host([on]) .b{background:#007bff;border-color:#007bff}
</style><div class="b">${el.hasAttribute("on") ? '<ui-icon name="check"></ui-icon>' : ""}</div><slot></slot>`);

define("prom-query", () => `<style>
:host{display:flex;height:76px;margin:0 30px;box-sizing:border-box;flex:none}
.s,.f,.a{box-sizing:border-box;border:2px solid #6c757d;display:flex;align-items:center;justify-content:center}
.s{width:84px;background:#343a40;border-radius:8px 0 0 8px}
.f{flex:1;border-left:0;justify-content:flex-start;padding-left:29px;color:#d4d4d4;font-family:"DejaVu Sans Mono",monospace;font-size:27px;--drop:0px}
.a{background:#343a40;border-left:0}
.x{width:168px;background:#0069d9;border-radius:0 8px 8px 0;box-shadow:0 0 0 6.500px rgba(30,108,190,.72);display:flex;align-items:center;justify-content:center;color:#c9d2dc;font-size:30.500px}
</style><div class="s"><ui-icon name="search"></ui-icon></div><div class="f"><fit-text w="542">:tensorflow:serving:request_count</fit-text></div>
<div class="a" style="width:78px"><ui-icon name="indent"></ui-icon></div><div class="a" style="width:82px"><ui-icon name="globe"></ui-icon></div><div class="x"><fit-text w="107">Execute</fit-text></div>`);

define("prom-tabs", () => `<style>
:host{display:flex;margin:20px 30px 0;height:84px;align-items:flex-end;font-size:30.5px;flex:none;position:relative;z-index:1;--drop:0px}
.t{box-sizing:border-box;height:84px;display:flex;align-items:center;padding-top:2px}
.a{width:141px;color:#007bff;padding-left:34px}
.b{width:154px;color:#fff;border:2px solid #495057;border-bottom:0;border-radius:8px 8px 0 0;background:#1a1d21;padding-left:32px}
.st{display:flex;gap:23px;margin-left:auto;align-self:flex-start;color:#a0a4a8;font-size:21.5px;--drop:.16em}
</style><div class="t a"><fit-text w="72">Table</fit-text></div><div class="t b"><fit-text w="86">Graph</fit-text></div>
<div class="st"><fit-text w="163">Load time: 14ms</fit-text><fit-text w="137">Resolution: 7s</fit-text><fit-text w="144">Result series: 2</fit-text></div>`);

define("graph-controls", () => `<style>
:host{display:flex;gap:40px;padding:20px 20px 0;height:62px;flex:none;font-size:26.5px;color:#6c757d;--drop:.14em}
.g{display:flex;box-sizing:border-box;height:62px;background:#6c757d;border-radius:8px;padding:2px 0}
.g div{display:flex;align-items:center;justify-content:center}
.k{background:#000}
.r{box-sizing:border-box;width:180px;border:2px solid #6c757d;border-radius:8px;background:#000;display:flex;align-items:center;justify-content:center}
.on{background:#545b62;border:2px solid #4e555b;box-sizing:border-box;border-radius:8px 0 0 8px;margin:-2px 0}
</style><div class="g"><div style="width:71px"><ui-icon name="minus"></ui-icon></div><div class="k" style="width:96px;color:#e8e8e8"><fit-text w="54">30m</fit-text></div><div style="width:71px"><ui-icon name="plusB"></ui-icon></div></div>
<div class="g"><div style="width:71px"><ui-icon name="left"></ui-icon></div><div class="k" style="width:398px"><fit-text w="109">End time</fit-text></div><div style="width:71px"><ui-icon name="right"></ui-icon></div></div>
<div class="r"><fit-text w="84">Res. (s)</fit-text></div>
<div class="g"><div class="on" style="width:71px"><ui-icon name="line"></ui-icon></div><div style="width:69px"><ui-icon name="area"></ui-icon></div></div>
<div class="g"><div style="width:236px;color:#d0d4d8"><fit-text w="200">Show Exemplars</fit-text></div></div>`);

define("graph-plot", () => {
  let s = "";
  [191,341,489,637,787,935,1085,1233,1383,1531,1681,1829,1977,2127,2275].forEach(x => { s += `<path d="M${x} 660V1510" stroke="#282c2f" stroke-width="2"/>`; });
  ["5.20","5.00","4.80","4.60","4.40","4.20","4.00"].forEach((l, i) => {
    const y = 661 + i * 134;
    if (i) s += `<path d="M108 ${y}H2341" stroke="#25292c" stroke-width="2"/>`;
    s += `<text x="96.500" y="${y + 7}" text-anchor="end" textLength="39">${l}</text>`;
  });
  return `<style>:host{display:block}svg{display:block}text{font:20.5px "Open Sans",sans-serif;fill:#545454}</style>
  <svg width="2356" height="880" viewBox="32 624 2356 880">${s}
  <path d="M106 1510V658H2342V1510" fill="none" stroke="#545454" stroke-width="4"/>
  <path d="M1089 1464h9" stroke="#008080" stroke-width="4"/><path d="M1089.500 1463L1098 795" stroke="#008000" stroke-width="4" fill="none"/></svg>`;
});

define("prom-page", () => `<style>
:host{display:flex;flex-direction:column;width:2420px;flex:none;background:#1a1d21;overflow:hidden}
.c{display:flex;align-items:center;height:108px;padding-left:30px;flex:none}
.p{margin:-2px 30px 0;border:2px solid #343a40;border-bottom:0;flex:none}
</style><prom-nav></prom-nav>
<div class="c"><prom-check on><fit-text w="198">Use local time</fit-text></prom-check><prom-check style="margin-left:40px"><fit-text w="288">Enable query history</fit-text></prom-check><prom-check on style="margin-left:39px"><fit-text w="300">Enable autocomplete</fit-text></prom-check><prom-check on style="margin-left:39px"><fit-text w="274">Enable highlighting</fit-text></prom-check><prom-check on style="margin-left:39px"><fit-text w="176">Enable linter</fit-text></prom-check></div>
<prom-query></prom-query><prom-tabs></prom-tabs>
<div class="p"><graph-controls></graph-controls><graph-plot></graph-plot></div>`);

define("task-app", el => `<style>
:host{display:flex;flex:none;width:76px;height:76px;margin:0 6px;flex-direction:column;align-items:center;box-sizing:border-box;padding-top:14px;position:relative;border-radius:8px}
.d{width:12px;height:6px;border-radius:3px;background:#7b8289;margin-top:8px}
:host([active]){background:#e8f2f9;box-shadow:0 1px 2px rgba(0,0,0,.2)}
:host([active]) .d{width:32px;background:#0078d4}
.bd{position:absolute;left:40px;top:4px}
</style><ui-icon name="${el.getAttribute("icon")}"></ui-icon>${el.hasAttribute("run") ? '<div class="d"></div>' : ""}<div class="bd"><slot></slot></div>`);

define("task-bar", () => `<style>
:host{display:flex;box-sizing:border-box;height:96px;flex:none;border-top:2px solid #a9b4be;align-items:center;background:linear-gradient(90deg,#d9dad8 0,#dadadb 190px,#d0dfe8 240px,#d1e5f3 400px,#d3e6f4 2180px,#d4dfe8 2380px,#d4d9e6 2460px,#d6d9e6 2560px);--drop:0px}
.w{position:relative;width:275px;height:76px;margin-left:20px;flex:none}
.w ui-icon{margin-top:13px}
.deg{position:absolute;left:17px;top:2px;width:46px;height:32px;border-radius:16px;background:rgba(247,247,247,.94);display:flex;align-items:center;justify-content:center;font-size:20.5px;color:#111}
.s{display:flex;box-sizing:border-box;align-items:center;width:437px;height:64px;border-radius:32px;background:#f2f7fc;border:2px solid #c3d5e2;border-bottom-color:#abbac6;margin-left:28px;padding:0 8px 0 20px;font-size:27px;color:#555}
.s .b{margin-left:auto}
.m{width:32px;height:32px;border-radius:50%;background:#455a64;color:#e0e5e8;font-size:19px;font-weight:600;line-height:32px;text-align:center}
.clk{display:flex;flex-direction:column;align-items:flex-end;width:122px;margin-left:32px;font-size:22.5px;color:#1a1a1a;gap:3px}
.apps{display:flex;margin-left:6px}
</style><div class="w"><ui-icon name="weather"></ui-icon><div class="deg"><fit-text w="28">31°</fit-text></div></div>
<ui-icon name="windows"></ui-icon>
<div class="s"><ui-icon name="tSearch"></ui-icon><fit-text w="82" style="margin-left:21px">Search</fit-text><ui-icon class="b" name="bing" w="40" h="40"></ui-icon></div>
<div class="apps"><task-app icon="taskview"></task-app><task-app icon="chat"></task-app><task-app icon="folder" run></task-app><task-app icon="edge" run active></task-app><task-app icon="store"></task-app><task-app icon="spotify" run></task-app><task-app icon="chrome" run><ui-icon name="badgePhoto"></ui-icon></task-app><task-app icon="chrome" run><div class="m">M</div></task-app><task-app icon="notepad" run></task-app><task-app icon="vscode" run></task-app><task-app icon="terminal" run></task-app><task-app icon="chrome" run><ui-icon name="badgeUser"></ui-icon></task-app><task-app icon="sticky" run></task-app><task-app icon="docker" run></task-app><task-app icon="paint" run></task-app></div>
<ui-icon name="chev" style="margin-left:46px"></ui-icon><ui-icon name="wifi" style="margin-left:37px"></ui-icon><ui-icon name="sound" style="margin-left:16px"></ui-icon><ui-icon name="battery" style="margin-left:15px;margin-top:-5px"></ui-icon>
<div class="clk"><fit-text w="57">15:15</fit-text><fit-text w="123">24/05/2023</fit-text></div>`);

define("desktop-screen", () => `<style>
:host{display:flex;flex-direction:column;width:2560px;height:1600px;font-family:"Open Sans","Noto Sans",sans-serif}
.m{display:flex;height:1364px;flex:none;background:#f7f7f7;overflow:hidden}
.l{width:2452px;flex:none}.ln{height:2px;background:#bbb}.r{display:flex;height:1362px}
</style><edge-tabs></edge-tabs><edge-toolbar></edge-toolbar>
<div class="m"><div class="l"><div class="ln"></div><div class="r"><prom-page></prom-page><page-scrollbar></page-scrollbar></div></div><edge-sidebar></edge-sidebar></div>
<task-bar></task-bar>`);
</script>
</body>
</html>
